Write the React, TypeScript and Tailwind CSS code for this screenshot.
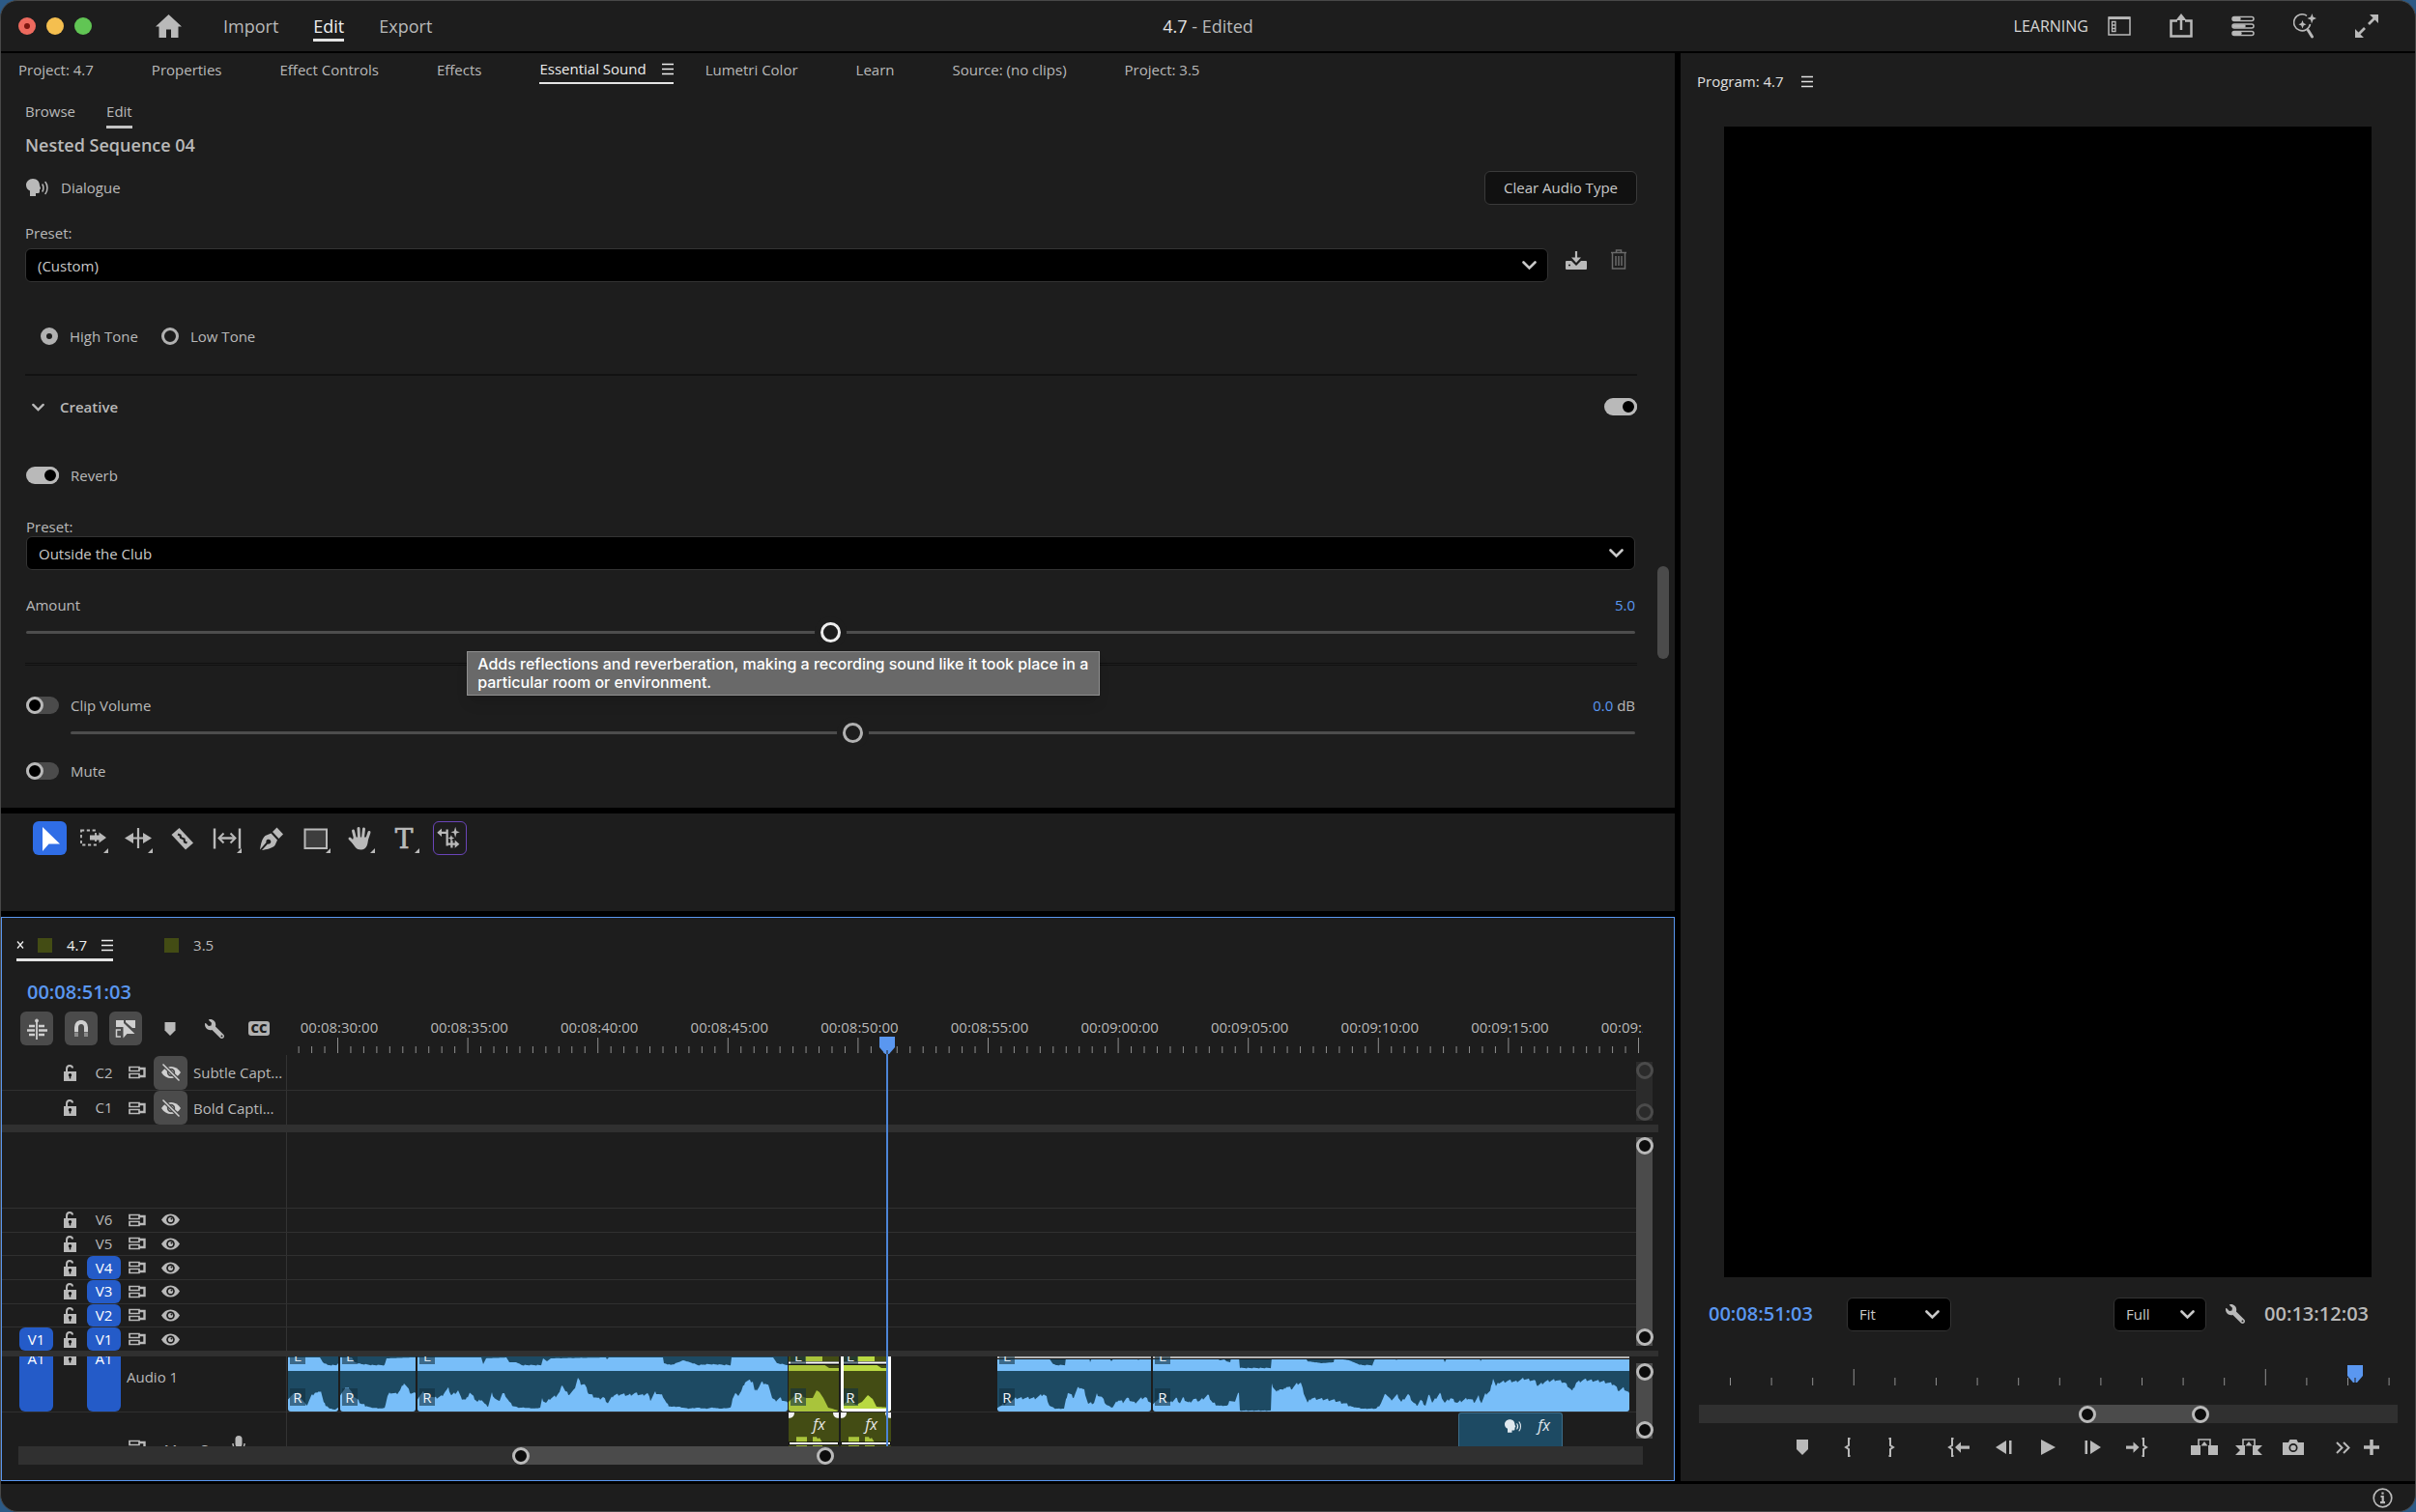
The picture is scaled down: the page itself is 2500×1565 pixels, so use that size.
import React, { useState } from 'react';
import { FaWrench } from 'react-icons/fa';
import clsx from 'clsx';

type Point = [number, number];

const panelTabs = [
  'Project: 4.7',
  'Properties',
  'Effect Controls',
  'Effects',
  'Essential Sound',
  'Lumetri Color',
  'Learn',
  'Source: (no clips)',
  'Project: 3.5',
];

const rulerLabels = [
  '00:08:30:00',
  '00:08:35:00',
  '00:08:40:00',
  '00:08:45:00',
  '00:08:50:00',
  '00:08:55:00',
  '00:09:00:00',
  '00:09:05:00',
  '00:09:10:00',
  '00:09:15:00',
  '00:09:20:00',
];

// Timeline lanes are measured in these units, clips are placed as a share of them
const LANE_WIDTH = 1396;
const RULER_WIDTH = 1403;

const videoTracks = [
  { id: 'V6', targeted: false },
  { id: 'V5', targeted: false },
  { id: 'V4', targeted: true },
  { id: 'V3', targeted: true },
  { id: 'V2', targeted: true },
  { id: 'V1', targeted: true, patch: 'V1' },
];

interface ClipData {
  start: number;
  width: number;
  kind: 'blue' | 'green';
  selected?: boolean;
  topEdge?: boolean;
  right: Point[];
  dips: Point[];
}

const clips: ClipData[] = [
  {
    start: 1,
    width: 52,
    kind: 'blue',
    right: [[0, 14], [10, 20], [19, 6], [24, 16], [28, 20], [31, 19], [34, 22], [37, 9], [43, 3], [49, 2], [52, 4]],
    dips: [[0, 0], [33, 0], [36, 5], [41, 8], [50, 8], [52, 6]],
  },
  {
    start: 55,
    width: 78,
    kind: 'blue',
    right: [[0, 18], [8, 26], [14, 16], [22, 8], [29, 5], [32, 4], [44, 3], [46, 4], [49, 16], [52, 20], [58, 18], [62, 22], [66, 30], [70, 24], [73, 19], [78, 19]],
    dips: [[0, 0], [12, 0], [15, 5], [22, 7], [34, 8], [46, 8], [48, 1], [78, 0]],
  },
  {
    start: 135,
    width: 383,
    kind: 'blue',
    right: [
      [0, 14], [6, 20], [14, 16], [18, 14], [25, 16], [28, 20], [32, 24], [35, 17], [40, 20], [42, 22], [45, 14], [50, 12], [54, 20], [58, 15], [62, 10], [66, 13], [70, 7], [73, 5],
      [77, 19], [80, 14], [84, 10], [88, 19], [91, 17], [95, 10], [98, 6], [105, 4], [112, 4], [122, 3], [127, 4], [129, 13], [133, 9], [138, 14], [143, 16], [147, 20], [150, 28],
      [153, 21], [157, 18], [162, 22], [166, 35], [169, 29], [173, 28], [177, 19], [182, 16], [188, 13], [192, 15], [197, 9], [203, 17], [210, 18], [218, 17], [225, 19], [232, 17],
      [238, 19], [241, 12], [246, 20], [250, 18], [254, 16], [258, 8], [262, 5], [270, 5], [280, 3], [290, 4], [298, 3], [305, 4], [315, 3], [324, 4], [326, 14], [329, 19], [331, 16],
      [335, 21], [339, 31], [343, 32], [347, 31], [349, 21], [353, 25], [356, 30], [360, 29], [364, 26], [367, 14], [370, 11], [375, 14], [383, 9],
    ],
    dips: [
      [0, 0], [66, 0], [68, 7], [71, 1], [92, 0], [95, 5], [102, 5], [108, 8], [128, 8], [130, 1], [134, 4], [138, 1], [195, 0], [196, 2], [198, 0], [254, 0], [255, 6], [262, 8],
      [270, 5], [275, 3], [282, 5], [290, 8], [302, 7], [324, 8], [325, 0], [368, 0], [372, 6], [383, 8],
    ],
  },
  {
    start: 519,
    width: 52,
    kind: 'green',
    right: [[0, 10], [8, 18], [18, 14], [25, 14], [29, 22], [32, 20], [36, 14], [41, 4], [52, 1]],
    dips: [],
  },
  {
    start: 573,
    width: 52,
    kind: 'green',
    selected: true,
    right: [[0, 5], [8, 12], [16, 7], [22, 10], [28, 17], [33, 13], [37, 5], [52, 4]],
    dips: [],
  },
  {
    start: 735,
    width: 159,
    kind: 'blue',
    topEdge: true,
    right: [
      [0, 4], [8, 8], [20, 14], [27, 14], [39, 14], [48, 18], [51, 15], [54, 6], [60, 3], [69, 3], [73, 20], [79, 15], [83, 24], [86, 25], [90, 22], [94, 8], [100, 9], [103, 18],
      [108, 15], [113, 7], [119, 4], [125, 12], [130, 10], [134, 14], [142, 9], [148, 13], [153, 15], [159, 9],
    ],
    dips: [[0, 0], [53, 0], [57, 6], [60, 8], [70, 8], [71, 0], [95, 0], [96, 5], [98, 0], [116, 1], [118, 4], [121, 0], [144, 0], [146, 3], [148, 0]],
  },
  {
    start: 896,
    width: 493,
    kind: 'blue',
    topEdge: true,
    right: [
      [0, 9], [10, 14], [18, 9], [24, 14], [28, 9], [31, 14], [37, 9], [42, 13], [48, 11], [57, 17], [62, 9], [69, 6], [77, 6], [79, 12], [84, 9], [88, 19], [89, 19], [90, 1], [122, 1],
      [123, 28], [128, 20], [131, 24], [135, 22], [138, 26], [144, 24], [148, 28], [153, 30], [156, 20], [160, 9], [164, 14], [173, 13], [186, 12], [197, 9], [206, 5], [217, 3],
      [231, 3], [236, 9], [241, 19], [246, 12], [253, 17], [257, 10], [264, 18], [269, 10], [273, 6], [277, 12], [282, 6], [286, 19], [289, 9], [297, 19], [302, 9], [308, 14], [315, 9],
      [326, 14], [333, 10], [337, 16], [340, 9], [344, 18], [349, 21], [352, 35], [355, 26], [358, 30], [368, 32], [375, 31], [384, 34], [395, 32], [398, 27], [406, 31], [417, 33],
      [426, 30], [430, 26], [434, 21], [438, 30], [446, 33], [467, 31], [477, 28], [482, 22], [487, 24], [493, 19],
    ],
    dips: [
      [0, 0], [66, 0], [69, 3], [74, 2], [76, 4], [80, 5], [81, 0], [89, 0], [90, 11], [122, 11], [123, 0], [158, 0], [160, 4], [175, 6], [187, 5], [188, 0], [197, 2], [203, 3],
      [210, 6], [216, 8], [227, 8], [230, 1], [250, 0], [252, 3], [254, 0], [300, 0], [302, 5], [304, 1], [312, 2], [314, 0], [338, 0], [339, 4], [341, 0], [493, 0]],
  },
];

// Steps along the points one unit at a time so the outline gets its ragged edge
function sample(points: Point[], rough: number) {
  const out: Point[] = [];
  for (let i = 0; i < points.length - 1; i++) {
    const [x0, y0] = points[i];
    const [x1, y1] = points[i + 1];
    for (let x = x0; x < x1; x++) {
      const y = y0 + ((y1 - y0) * (x - x0)) / (x1 - x0);
      const noise = (((x * 7919) % 13) / 13 - 0.5) * rough * (y > 6 ? 1 : 0.2);
      out.push([x, Math.max(0, y + noise)]);
    }
  }
  out.push(points[points.length - 1]);
  return out;
}

function Hamburger({ className = '' }: { className?: string }) {
  return (
    <svg width="12" height="13" viewBox="0 0 12 13" className={className} stroke="currentColor" strokeWidth="1.5">
      <path d="M0 1.5h12M0 6.5h12M0 11.5h12" />
    </svg>
  );
}

function Chevron({ size = 15 }: { size?: number }) {
  return (
    <svg width={size} height={size} viewBox="0 0 15 15" fill="none" stroke="currentColor" strokeWidth="2.6" strokeLinecap="round">
      <path d="M1.5 4.5l6 6 6-6" />
    </svg>
  );
}

function SpeakingHead({ className = '' }: { className?: string }) {
  return (
    <svg width="24" height="18" viewBox="0 0 24 18" className={className}>
      <path fill="currentColor" d="M7 0C3 0 0 3 0 6.6c0 3 1.5 4.9 4 6V18h6v-3h2.5c1.2 0 1.5-.8 1.5-2v-2l1.2-.8L14 7C14 3 11.5 0 7 0z" />
      <path fill="none" stroke="currentColor" strokeWidth="1.5" strokeLinecap="round" d="M17 6c1.2 1.8 1.2 5.2 0 7M20 3.5c2.6 3 2.6 9 0 12" />
    </svg>
  );
}

function MarkerIcon() {
  return (
    <svg width="14" height="16" viewBox="0 0 14 16" fill="currentColor">
      <path d="M1.500 1h11v8.500L7 15 1.500 9.500z" />
    </svg>
  );
}

function LockIcon({ open = true }: { open?: boolean }) {
  return (
    <svg width="15" height="17" viewBox="0 0 15 17">
      <path fill="currentColor" d="M1 7h13v10H1z" />
      <path fill="none" stroke="currentColor" strokeWidth="2" d={open ? 'M4 8V4.5C4 2.500 5 1 7 1s3 1 3 2.500' : 'M4 8V4c0-4 7-4 7 0v4'} />
      <circle cx="7.5" cy="10.8" r="1.700" fill="#111" />
      <path stroke="#111" strokeWidth="1.500" d="M7.500 11v3.500" />
    </svg>
  );
}

function SyncIcon() {
  return (
    <svg width="18" height="14" viewBox="0 0 18 14" fill="none" stroke="currentColor" strokeWidth="1.7">
      <path d="M1 1.5h10v4H1zM1 8.5h10v4H1z" />
      <path strokeWidth="2.400" d="M11 3h5.500v8H11" />
    </svg>
  );
}

function EyeIcon() {
  return (
    <svg width="19" height="13" viewBox="0 0 19 13">
      <path fill="currentColor" d="M0 6.500C2.500 2.500 5.500.5 9.500.5s7 2 9.500 6c-2.500 4-5.500 6-9.500 6s-7-2-9.500-6z" />
      <circle cx="9.500" cy="6.500" r="4.300" fill="#1d1d1d" />
      <circle cx="9.500" cy="6.500" r="2.600" fill="currentColor" />
      <circle cx="10.500" cy="5.500" r="1" fill="#1d1d1d" />
    </svg>
  );
}

function EyeOffIcon() {
  return (
    <svg width="20" height="18" viewBox="0 0 20 18">
      <path fill="currentColor" d="M0 9c2.500-4 6-6 10-6s7.500 2 10 6c-2.500 4-6 6-10 6S2.500 13 0 9z" />
      <circle cx="10" cy="9" r="4.200" fill="#4b4b4b" />
      <circle cx="10" cy="9" r="2.500" fill="currentColor" />
      <path stroke="#4b4b4b" strokeWidth="4" d="M2 1l16 16" />
      <path stroke="currentColor" strokeWidth="1.500" d="M1.500 .5l17 17" />
    </svg>
  );
}

function Switch({ label, defaultChecked = false, hideLabel = false }: { label: string; defaultChecked?: boolean; hideLabel?: boolean }) {
  const [on, setOn] = useState(defaultChecked);
  return (
    <label className="flex items-center gap-3">
      <input
        type="checkbox"
        role="switch"
        aria-label={label}
        checked={on}
        onChange={() => setOn(!on)}
        className="flex h-[18px] w-[34px] appearance-none rounded-full bg-[#4b4b4b] before:size-[18px] before:rounded-full before:border-[3px] before:border-[#b9b9b9] before:bg-black before:content-[''] checked:justify-end checked:bg-[#b9b9b9]"
      />
      {!hideLabel && <span>{label}</span>}
    </label>
  );
}

function Slider({ label, bright = false }: { label: string; bright?: boolean }) {
  const [value, setValue] = useState(50);
  return (
    <input
      type="range"
      aria-label={label}
      value={value}
      onChange={(e) => setValue(Number(e.target.value))}
      className={clsx(
        'block h-5 w-full appearance-none bg-transparent',
        '[&::-webkit-slider-runnable-track]:h-[3px] [&::-webkit-slider-runnable-track]:rounded-full [&::-webkit-slider-runnable-track]:bg-[#4d4d4d]',
        '[&::-webkit-slider-thumb]:-mt-[9px] [&::-webkit-slider-thumb]:size-[21px] [&::-webkit-slider-thumb]:appearance-none [&::-webkit-slider-thumb]:rounded-full [&::-webkit-slider-thumb]:border-[3px] [&::-webkit-slider-thumb]:bg-[#1d1d1d] [&::-webkit-slider-thumb]:shadow-[0_0_0_6px_#1d1d1d]',
        bright ? '[&::-webkit-slider-thumb]:border-[#ededed]' : '[&::-webkit-slider-thumb]:border-[#b1b1b1]'
      )}
    />
  );
}

function Dropdown({ id, value, label, className = '' }: { id: string; value: string; label?: string; className?: string }) {
  return (
    <div className={`relative ${className}`}>
      <select
        id={id}
        aria-label={label}
        defaultValue={value}
        className="block h-[35px] w-full appearance-none rounded-md border border-[#333] bg-black pr-8 pl-3 text-[#c9c9c9]"
      >
        <option>{value}</option>
      </select>
      <span className="pointer-events-none absolute inset-y-0 right-3 flex items-center text-[#c9c9c9]">
        <Chevron />
      </span>
    </div>
  );
}

function Handle({ dim = false, label }: { dim?: boolean; label: string }) {
  return (
    <button
      aria-label={label}
      className={clsx('block size-[18px] rounded-full border-[3px]', dim ? 'border-[#4b4b4b] bg-[#2b2b2b]' : 'border-[#b9b9b9] bg-[#0c0c0c]')}
    />
  );
}

function ZoomBar({ from, to }: { from: number; to: number }) {
  return (
    <div className="flex h-[19px] items-stretch bg-[#303030]">
      <div style={{ width: `${from}%` }} />
      <div className="flex items-center justify-between rounded-full bg-[#4b4b4b]" style={{ width: `${to - from}%` }}>
        <Handle label="Zoom start" />
        <Handle label="Zoom end" />
      </div>
    </div>
  );
}

function TrackZoom({ dim = false, className = '' }: { dim?: boolean; className?: string }) {
  return (
    <div className={clsx('mr-[22px] flex w-[17px] flex-col items-center justify-between', dim ? 'bg-[#2b2b2b]' : 'bg-[#4b4b4b]', className)}>
      <Handle dim={dim} label="Track height start" />
      <Handle dim={dim} label="Track height end" />
    </div>
  );
}

function TopBar() {
  const modes = ['Import', 'Edit', 'Export'];
  return (
    <header className="grid h-[52px] grid-cols-3 items-center">
      <div className="flex h-full items-center pl-[18px]">
        <div className="flex gap-[11px]">
          <button aria-label="Close" className="flex size-[18px] items-center justify-center rounded-full bg-[#ed6a5e]">
            <span className="size-1.5 rounded-full bg-[#7d170f]" />
          </button>
          <button aria-label="Minimize" className="size-[18px] rounded-full bg-[#f5bf4f]" />
          <button aria-label="Zoom" className="size-[18px] rounded-full bg-[#61c554]" />
        </div>
        <button aria-label="Home" className="ml-[66px] text-[#b9b9b9]">
          <svg width="27" height="24" viewBox="0 0 27 24" fill="currentColor">
            <path d="M13.500 0L27 12.500h-3.500V24H16v-8.500h-5V24H3.500V12.500H0z" />
          </svg>
        </button>
        <nav className="ml-[43px] flex gap-9 text-lg">
          {modes.map((mode) => (
            <button
              key={mode}
              className={clsx('h-8 border-b-[3px] pt-0.5', mode === 'Edit' ? 'border-[#e4e4e4] text-[#f0f0f0]' : 'border-transparent')}
            >
              {mode}
            </button>
          ))}
        </nav>
      </div>
      <h1 className="text-center text-lg">
        <span className="text-[#e4e4e4]">4.7</span> - Edited
      </h1>
      <div className="flex items-center justify-end gap-10 pr-[38px]">
        <button className="-mr-5 text-base text-[#d6d6d6]">LEARNING</button>
        <button aria-label="Workspaces">
          <svg width="24" height="24" viewBox="0 0 24 24" fill="none" stroke="currentColor">
            <path strokeWidth="1.500" d="M1 3h22v18H1z" />
            <path strokeWidth="2.500" d="M1 3.700h22" />
            <path strokeWidth="1.300" d="M4.500 7.500h3.500v10H4.500zM4.500 11h3.500M4.500 14.500h3.500" />
          </svg>
        </button>
        <button aria-label="Quick export">
          <svg width="24" height="26" viewBox="0 0 24 26" fill="none" stroke="currentColor">
            <path strokeWidth="2.500" d="M8 7.500H1.500v16h21v-16H16" />
            <path strokeWidth="2.500" d="M12 4v13" />
            <path fill="currentColor" stroke="none" d="M12 0l5.500 7h-11z" />
          </svg>
        </button>
        <button aria-label="Progress">
          <svg width="24" height="22" viewBox="0 0 24 22" fill="#111" stroke="currentColor" strokeWidth="1.500">
            <rect x="1" y="1.500" width="22" height="4" rx="2" />
            <rect x="1" y="9" width="22" height="4" rx="2" />
            <rect x="1" y="16.500" width="22" height="4" rx="2" />
            <path strokeWidth="3.500" strokeLinecap="round" d="M3 3.500h5M3 11h10M3 18.500h6" />
          </svg>
        </button>
        <button aria-label="Search">
          <svg width="24" height="26" viewBox="0 0 24 26" fill="none" stroke="currentColor">
            <path strokeWidth="1.600" d="M14 2.300A8.500 8.500 0 1 0 17.500 11" />
            <path strokeWidth="3" strokeLinecap="round" d="M15.500 17.500l4 6.500" />
            <path
              fill="currentColor"
              stroke="none"
              d="M19.500 0l1 3.500L24 5l-3.500 1.500-1.500 4-1-4L14.500 5 18 3.500zM9.500 7l1.200 3 2.800 1.200-2.800 1.300-1.200 3-1.200-3-2.800-1.300 2.800-1.200z"
            />
          </svg>
        </button>
        <button aria-label="Full screen">
          <svg width="24" height="24" viewBox="0 0 24 24" stroke="currentColor" strokeWidth="2.800">
            <path d="M14 10l6-6M10 14l-6 6" />
            <path fill="currentColor" stroke="none" d="M24 0v9L15 0zM0 24v-9l9 9z" />
          </svg>
        </button>
      </div>
    </header>
  );
}

function EssentialSound() {
  return (
    <section className="relative bg-[#1d1d1d] pb-2">
      <div className="flex h-9 gap-[33px] pl-[18px]">
        {panelTabs.map((tab) =>
          tab === 'Essential Sound' ? (
            <div key={tab} className="mb-1 flex items-center gap-4 border-b-2 border-[#e4e4e4] pt-0.5 text-[#ededed]">
              <button>{tab}</button>
              <button aria-label="Panel menu">
                <Hamburger />
              </button>
            </div>
          ) : (
            <button key={tab} className="pr-[27px] pb-0.5">
              {tab}
            </button>
          )
        )}
      </div>
      <div className="flex h-[42px] gap-8 pl-[25px]">
        <button className="border-b-[3px] border-transparent pt-2">Browse</button>
        <button className="border-b-[3px] border-[#c4c4c4] pt-2">Edit</button>
      </div>
      <div className="pr-[39px] pl-[25px]">
        <h2 className="flex h-[34px] items-center text-lg font-semibold">Nested Sequence 04</h2>
        <div className="flex h-[54px] items-center">
          <SpeakingHead className="ml-px" />
          <span className="ml-3">Dialogue</span>
          <button className="ml-auto h-[35px] rounded-md border border-[#3a3a3a] bg-[#111] px-[19px] text-[#c9c9c9]">Clear Audio Type</button>
        </div>
        <label htmlFor="clip-preset" className="flex h-9 items-center pt-1">
          Preset:
        </label>
        <div className="flex items-start">
          <Dropdown id="clip-preset" value="(Custom)" className="flex-1" />
          <button aria-label="Save preset" className="mt-[3px] ml-[18px]">
            <svg width="22" height="19" viewBox="0 0 22 19">
              <path fill="currentColor" d="M1 10h5l5 5 5-5h5a1 1 0 0 1 1 1v7a1 1 0 0 1-1 1H1a1 1 0 0 1-1-1v-7a1 1 0 0 1 1-1z" />
              <path stroke="currentColor" strokeWidth="2.200" d="M11 0v8" />
              <path fill="currentColor" d="M6 6.500h10L11 12z" />
              <path stroke="#1d1d1d" strokeWidth="1.500" d="M3 14.500h2" />
            </svg>
          </button>
          <button aria-label="Delete preset" disabled className="mt-px mr-2.5 ml-6 text-[#6a6a6a]">
            <svg width="18" height="21" viewBox="0 0 18 21" fill="none" stroke="currentColor" strokeWidth="1.500">
              <path d="M1 3.500h16M6.500 3V1h5v2M2.500 4v16h13V4M6 7v10M9 7v10M12 7v10" />
            </svg>
          </button>
        </div>
        <div className="mt-[38px] flex h-9 items-center gap-6 pl-4">
          {['High Tone', 'Low Tone'].map((tone, i) => (
            <label key={tone} className="flex items-center gap-3">
              <input
                type="radio"
                name="tone"
                defaultChecked={i === 0}
                className="size-[18px] appearance-none rounded-full border-[3px] border-[#b1b1b1] checked:border-[6px]"
              />
              {tone}
            </label>
          ))}
        </div>
        <div className="mt-[21px] h-0.5 bg-[#121212]" />
        <div className="flex h-16 items-center pl-px">
          <button className="flex items-center gap-4 pl-1.5 font-semibold">
            <Chevron size={13} />
            Creative
          </button>
          <div className="ml-auto">
            <Switch label="Creative" defaultChecked hideLabel />
          </div>
        </div>
        <div className="flex h-[78px] items-center pl-px">
          <Switch label="Reverb" defaultChecked />
        </div>
        <div className="pr-0.5 pl-px">
          <label htmlFor="reverb-preset" className="flex h-6 items-center pt-1">
            Preset:
          </label>
          <Dropdown id="reverb-preset" value="Outside the Club" />
          <div className="flex h-[54px] items-center justify-between pt-[18px]">
            <span>Amount</span>
            <span className="text-[#5a97f0]">5.0</span>
          </div>
          <div className="relative">
            <Slider label="Amount" bright />
            <div
              role="tooltip"
              className="absolute top-[30px] left-[27.4%] z-10 w-[655px] border border-[#8f8f8f] bg-[#696969] px-2.5 py-[3px] font-['Inter',sans-serif] text-base leading-[19px] font-medium text-white shadow-lg"
            >
              Adds reflections and reverberation, making a recording sound like it took place in a particular room or environment.
            </div>
          </div>
        </div>
        <div className="mt-[22px] h-[3px] border-y border-[#111] bg-[#1d1d1d]" />
        <div className="pr-0.5 pl-px">
          <div className="flex h-[59px] items-center justify-between pt-[22px]">
            <Switch label="Clip Volume" />
            <span>
              <span className="text-[#5a97f0]">0.0</span> dB
            </span>
          </div>
          <div className="pl-[46px]">
            <Slider label="Clip Volume" />
          </div>
        </div>
        <div className="flex h-[60px] items-center pl-px">
          <Switch label="Mute" />
        </div>
      </div>
      <div className="absolute top-[68%] right-1.5 h-24 w-3 rounded-full bg-[#4b4b4b]" />
    </section>
  );
}

function Corner() {
  return <path fill="currentColor" stroke="none" d="M32 28v5h-5z" />;
}

const tools = [
  {
    label: 'Selection',
    art: <path fill="#fff" d="M10 6v25l6.500-7.500H28z" />,
  },
  {
    label: 'Track select',
    art: (
      <>
        <path fill="none" stroke="currentColor" strokeWidth="1.800" strokeDasharray="3.200 2.600" d="M4 9.500h15v15H4z" />
        <path fill="currentColor" d="M13 14.500h9.500V11.500L30 17l-7.500 5.500v-3H13z" />
        <Corner />
      </>
    ),
  },
  {
    label: 'Ripple edit',
    art: (
      <>
        <path stroke="currentColor" strokeWidth="2.200" d="M17 7v21M8 17.500h18" />
        <path fill="currentColor" d="M3 17.500l9-5.500v11zM31 17.500l-9-5.500v11z" />
        <Corner />
      </>
    ),
  },
  {
    label: 'Razor',
    art: (
      <>
        <path fill="currentColor" d="M5.500 14l8-7L28 22.500l-8 7z" />
        <path fill="none" stroke="#1d1d1d" strokeWidth="2.200" d="M12 13.500l2.500 1 .5 2.500 3.500 1.500.5 3 2.500 1" />
      </>
    ),
  },
  {
    label: 'Slip',
    art: (
      <>
        <path stroke="currentColor" strokeWidth="2.400" d="M4 7.500v21M30 7.500v21M10 17.500h14" />
        <path fill="none" stroke="currentColor" strokeWidth="2" d="M13.500 12.500l-5 5 5 5M20.500 12.500l5 5-5 5" />
        <Corner />
      </>
    ),
  },
  {
    label: 'Pen',
    art: (
      <>
        <path fill="currentColor" d="M5 29.500c1-6 2-11.500 5.500-14.500l6-2.500 6.500 7-2.500 5.500c-3 3.500-9 4-13.500 5l6-6.500a2.500 2.500 0 1 0-1.500-1.500z" />
        <path fill="currentColor" d="M18 11l4.500-4.500 6.500 7-4.500 4.500z" />
      </>
    ),
  },
  {
    label: 'Rectangle',
    art: (
      <>
        <path fill="#3d3d3d" stroke="currentColor" strokeWidth="2" d="M5.500 8.500h22.500v19.500H5.500z" />
        <Corner />
      </>
    ),
  },
  {
    label: 'Hand',
    art: (
      <>
        <path
          fill="none"
          stroke="currentColor"
          strokeWidth="3"
          strokeLinecap="round"
          d="M11.500 18L9.500 10M15.500 17l-.5-9.500M19.500 17l1-9M23.500 19l2.500-7.500M11 23l-5-5"
        />
        <path fill="currentColor" d="M10 16.500h15c0 7-1.500 13-7.500 13-5 0-6.500-3.500-9.500-8z" />
        <Corner />
      </>
    ),
  },
  {
    label: 'Type',
    art: (
      <>
        <text x="16" y="28" textAnchor="middle" fontSize="28" fontFamily="DejaVu Serif, serif" fill="currentColor" stroke="currentColor" strokeWidth="0.700">
          T
        </text>
        <Corner />
      </>
    ),
  },
  {
    label: 'Generative extend',
    art: (
      <>
        <path stroke="currentColor" strokeWidth="2.400" d="M14.500 8v18M5 11.500h9M15 24h9M19.500 20v8" />
        <path fill="currentColor" d="M3.500 11.500L8.500 7v9zM28 24l-5-4.500v9z" />
        <path fill="currentColor" d="M23.500 5l1.300 4.700L28.500 11l-3.700 1.300L23.500 17l-1.300-4.700L18.500 11l3.700-1.300zM19 14l1 2.500 2.500 1-2.500 1-1 2.500-1-2.500-2.500-1 2.500-1z" />
      </>
    ),
  },
];

function Tools() {
  const [active, setActive] = useState('Selection');
  return (
    <section className="flex h-[101px] gap-[11px] bg-[#1d1d1d] pt-2 pl-[33px]">
      {tools.map((tool) => (
        <button
          key={tool.label}
          aria-label={tool.label}
          onClick={() => setActive(tool.label)}
          className={clsx(
            'size-[35px] rounded-md',
            active === tool.label && 'bg-[#2f6de6]',
            tool.label === 'Generative extend' && 'border border-[#6a45b8]'
          )}
        >
          <svg viewBox="0 0 35 35" className="size-full">
            {tool.art}
          </svg>
        </button>
      ))}
    </section>
  );
}

interface TrackHeaderProps {
  patch?: string;
  name: string;
  targeted?: boolean;
  children?: React.ReactNode;
}

function TrackHeader({ patch, name, targeted, children }: TrackHeaderProps) {
  return (
    <div className="grid h-full w-[295px] shrink-0 grid-cols-[35px_35px_35px_34px_35px_1fr] items-center justify-items-center border-r border-[#333] pl-[18px]">
      {patch ? <button className="h-full w-full rounded-md bg-[#245bc8] leading-none text-white">{patch}</button> : <span />}
      <button aria-label={`Lock ${name}`}>
        <LockIcon />
      </button>
      <button className={clsx('h-full w-full rounded-md leading-none', targeted && 'bg-[#245bc8] text-white')}>{name}</button>
      <button aria-label={`Sync lock ${name}`}>
        <SyncIcon />
      </button>
      {children}
    </div>
  );
}

function Clip({ clip }: { clip: ClipData }) {
  const green = clip.kind === 'green';
  const dark = green ? '#434c14' : '#1d4a63';
  const light = green ? (clip.selected ? '#b9d942' : '#a9c43b') : '#78bef9';
  const w = clip.width;
  const wave = sample(clip.right, green ? 0 : 3);
  const dips = clip.dips.length ? sample(clip.dips, 1) : [];
  return (
    <div
      className="absolute inset-y-0 overflow-hidden rounded-b-[3px]"
      style={{ left: `${(clip.start / LANE_WIDTH) * 100}%`, width: `${(w / LANE_WIDTH) * 100}%` }}
    >
      <svg viewBox={`0 0 ${w} 57`} preserveAspectRatio="none" className="block h-full w-full">
        <rect width={w} height="57" fill={dark} />
        {green ? (
          <>
            <path fill={light} d={`M17 0H35V5H17zM0 8H36L42 12H${w}V15H0z`} />
            <path stroke="#111" strokeWidth="4" d={`M0 7H${w}`} />
            <path stroke="#fff" strokeWidth="2" d={`M0 6.500H${w}`} />
          </>
        ) : (
          <>
            <rect y="1" width={w} height="14" fill={light} />
            <path fill={dark} d={`M0 1 ${dips.map(([x, d]) => `L${x} ${1 + d}`).join(' ')} L${w} 1z`} />
          </>
        )}
        <path fill={light} d={`M0 57 ${wave.map(([x, h]) => `L${x} ${57 - h}`).join(' ')} L${w} 57z`} />
        {clip.topEdge && (
          <>
            <path stroke="#b4b4b4" strokeWidth="2" d={`M0 1H${w}`} />
            <path stroke="#111" strokeWidth="1" d={`M0 2.500H${w}`} />
          </>
        )}
      </svg>
      <span className="absolute -top-2.5 left-0.5 h-[18px] w-4 bg-[#12303f]/60 text-center leading-[18px] text-[#e0e8ee]">L</span>
      <span className="absolute bottom-1.5 left-0.5 h-[18px] w-4 bg-[#12303f]/60 text-center leading-[18px] text-[#f0f4f7]">R</span>
      {clip.selected && <span className="absolute inset-x-0 -top-1 bottom-0 border-[3px] border-white" />}
    </div>
  );
}

function FxClip({ start }: { start: number }) {
  return (
    <div className="absolute inset-y-0" style={{ left: `${(start / LANE_WIDTH) * 100}%`, width: `${(52 / LANE_WIDTH) * 100}%` }}>
      <svg viewBox="0 0 52 36" preserveAspectRatio="none" className="block h-full w-full">
        <rect width="52" height="36" fill="#434c14" />
        <path fill="#a9c43b" d="M8 26h11v10H8zM25 26h4l1 2 2-1 3 5v4H25z" />
        <path stroke="#111" strokeWidth="4" d="M0 33H52" />
        <path stroke="#fff" strokeWidth="2" d="M1 33H51" />
        <path fill="#f2f2f2" d="M0 0h6c0 4-2 6-6 6zM52 0h-6c0 4 2 6 6 6z" />
      </svg>
      <span className="absolute top-0.5 right-3.5 text-base leading-5 text-[#e8e8e8] italic">fx</span>
    </div>
  );
}

function Timeline() {
  const ticks = Array.from({ length: 104 }, (_, i) => i - 3);
  return (
    <section className="flex flex-1 flex-col border border-[#5a97f0] bg-[#1d1d1d]">
      <div className="flex h-[45px] gap-[53px] pl-[15px]">
        <div className="flex items-center border-b-[3px] border-[#e4e4e4] pt-3.5 text-[#ededed]">
          <button aria-label="Close 4.7" className="w-2.5">
            <svg width="8" height="8" viewBox="0 0 8 8" stroke="currentColor" strokeWidth="1.300">
              <path d="M1 .5l6 7M7 .5l-6 7" />
            </svg>
          </button>
          <span className="ml-3 size-[15px] bg-[#434c14]" />
          <button className="ml-[15px]">4.7</button>
          <button aria-label="Sequence menu" className="ml-[15px]">
            <Hamburger />
          </button>
        </div>
        <button className="flex items-center gap-[15px] border-b-[3px] border-transparent pt-3.5">
          <span className="size-[15px] bg-[#434c14]" />
          3.5
        </button>
      </div>
      <div className="flex h-[52px] items-center pt-3 pl-[26px] text-xl font-semibold text-[#5a97f0]">00:08:51:03</div>

      <div className="relative flex flex-1 flex-col">
        <div className="flex h-[45px]">
          <div className="flex w-[295px] shrink-0 items-start gap-3 pl-[19px] [&>button]:flex [&>button]:h-[35px] [&>button]:w-[34px] [&>button]:items-center [&>button]:justify-center [&>button]:rounded-md">
            <button aria-label="Insert as nest" className="bg-[#4b4b4b] text-[#d0d0d0]">
              <svg width="22" height="22" viewBox="0 0 22 22" stroke="currentColor" fill="none">
                <path strokeWidth="1.800" d="M11 2v20" />
                <circle cx="11" cy="2.500" r="1.500" fill="currentColor" />
                <path strokeWidth="2.600" d="M3 8h6M13 8h6M1 12.500h8M13 12.500h9M3 17h6M13 17h6" />
              </svg>
            </button>
            <button aria-label="Snap" className="bg-[#4b4b4b] text-[#d0d0d0]">
              <svg width="16" height="18" viewBox="0 0 16 18" fill="none" strokeWidth="4">
                <path stroke="currentColor" d="M3 12V7.500C3 0 13 0 13 7.500V12" />
                <path stroke="#8a8a8a" d="M3 12.500V17M13 12.500V17" />
              </svg>
            </button>
            <button aria-label="Linked selection" className="bg-[#4b4b4b] text-[#d0d0d0]">
              <svg width="22" height="20" viewBox="0 0 22 20">
                <path fill="currentColor" d="M1 1h8v7H1zM11 1h10v8h-3L11 3z" />
                <path fill="none" stroke="currentColor" strokeWidth="1.500" d="M6 11H1.500v7H6" />
                <path fill="currentColor" d="M8.500 3.500v16l4-4.500h8z" />
              </svg>
            </button>
            <button aria-label="Add marker">
              <MarkerIcon />
            </button>
            <button aria-label="Timeline settings">
              <FaWrench className="size-5 -scale-x-100" />
            </button>
            <button aria-label="Captions">
              <span className="rounded-[3px] bg-[#b1b1b1] px-[3px] text-[13px] leading-[15px] font-extrabold text-[#1d1d1d]">CC</span>
            </button>
          </div>
          <div className="relative mr-8 flex-1 overflow-hidden">
            {rulerLabels.map((label, i) => (
              <span key={label} className="absolute top-1.5 -translate-x-1/2" style={{ left: `${((54 + i * 134.6) / RULER_WIDTH) * 100}%` }}>
                {label}
              </span>
            ))}
            <svg className="absolute inset-0 h-full w-full" stroke="#8f8f8f">
              {ticks.map((i) => {
                const x = `${((52.5 + i * 13.46) / RULER_WIDTH) * 100}%`;
                return <line key={i} x1={x} x2={x} y1={i % 10 === 0 ? 27 : 36} y2="43" />;
              })}
            </svg>
          </div>
        </div>

        {/* Caption tracks */}
        <div className="flex h-[72px]">
          <div className="flex-1">
            {[
              { id: 'C2', name: 'Subtle Capt...' },
              { id: 'C1', name: 'Bold Capti...' },
            ].map((track, i) => (
              <div key={track.id} className={clsx('h-9', i === 1 && 'border-t border-[#303030]')}>
                <TrackHeader name={track.id}>
                  <button aria-label={`Show ${track.id}`} className="flex h-[35px] w-[35px] items-center justify-center rounded-md bg-[#4b4b4b] text-[#d0d0d0]">
                    <EyeOffIcon />
                  </button>
                  <span className="justify-self-start pl-1.5 whitespace-nowrap">{track.name}</span>
                </TrackHeader>
              </div>
            ))}
          </div>
          <TrackZoom dim className="mt-[7px] mb-1" />
        </div>
        <div className="mr-4 h-2 bg-[#303030]" />

        {/* Video tracks */}
        <div className="flex flex-1">
          <div className="flex flex-1 flex-col">
            <div className="w-[295px] flex-1 border-r border-[#333]" />
            <div className="grid h-[148px] grid-rows-6">
              {videoTracks.map((track) => (
                <div key={track.id} className="border-t border-[#303030]">
                  <TrackHeader name={track.id} targeted={track.targeted} patch={track.patch}>
                    <button aria-label={`Toggle ${track.id} output`}>
                      <EyeIcon />
                    </button>
                  </TrackHeader>
                </div>
              ))}
            </div>
          </div>
          <TrackZoom className="mt-[5px] mb-[5px]" />
        </div>
        <div className="mr-4 h-1.5 bg-[#303030]" />

        {/* Audio tracks, scrolled so the first and the second are cut off */}
        <div className="flex h-[93px] overflow-hidden">
          <div className="w-[295px] shrink-0 border-r border-[#333]">
            <div className="grid h-[58px] grid-cols-[35px_35px_35px_1fr] justify-items-center overflow-hidden border-b border-[#303030] pl-[18px]">
              <button className="-mt-2 flex h-[65px] w-full justify-center rounded-md bg-[#245bc8] leading-5 text-white">A1</button>
              <button aria-label="Lock A1" className="-mt-2 self-start">
                <LockIcon open={false} />
              </button>
              <button className="-mt-2 flex h-[65px] w-full justify-center rounded-md bg-[#245bc8] leading-5 text-white">A1</button>
              <span className="justify-self-start pt-[11px] pl-1.5">Audio 1</span>
            </div>
            <div className="grid h-[35px] grid-cols-[34px_35px_35px_35px] items-start justify-items-center overflow-hidden pt-7 pl-[123px]">
              <SyncIcon />
              <button className="leading-5">M</button>
              <button className="leading-5">S</button>
              <button aria-label="Voice-over record" className="-mt-1">
                <svg width="14" height="18" viewBox="0 0 14 18">
                  <rect x="3.500" width="7" height="12" rx="3.500" fill="currentColor" />
                  <path fill="none" stroke="currentColor" strokeWidth="1.500" d="M1 8c0 8 12 8 12 0" />
                </svg>
              </button>
            </div>
          </div>
          <div className="flex-1">
            <div className="relative h-[58px] border-b border-[#303030]">
              {clips.map((clip) => (
                <Clip key={clip.start} clip={clip} />
              ))}
            </div>
            <div className="relative h-[35px]">
              <FxClip start={519} />
              <FxClip start={573} />
              <div
                className="absolute inset-y-0 flex justify-end gap-4 rounded-t-[3px] border border-b-0 border-[#3c6d8a] bg-[#1d4a63] pt-0.5 pr-3 text-[#e0e8ee]"
                style={{ left: `${(1212 / LANE_WIDTH) * 100}%`, width: `${(108 / LANE_WIDTH) * 100}%` }}
              >
                <SpeakingHead className="mt-1 h-3.5 w-[18px]" />
                <span className="text-base leading-5 italic">fx</span>
              </div>
            </div>
          </div>
          <TrackZoom className="mt-[7px] mb-2" />
        </div>

        {/* Playhead */}
        <div className="pointer-events-none absolute inset-y-0 right-[39px] left-[295px]">
          <div className="absolute top-[26px] bottom-0 left-[44.5%] flex -translate-x-1/2 flex-col items-center">
            <svg width="16" height="18" viewBox="0 0 16 18" className="shrink-0">
              <path fill="#5a97f0" d="M0 0h16v11l-6 7H6l-6-7z" />
              <path stroke="#1d1d1d" d="M8 14v4" />
            </svg>
            <div className="w-0.5 flex-1 bg-[#4c84d6]" />
          </div>
        </div>
      </div>
      <div className="mr-8 mb-4 ml-[17px]">
        <ZoomBar from={30.4} to={50.2} />
      </div>
    </section>
  );
}

const transport = [
  [
    { label: 'Add marker', w: 14, art: <path d="M1 0h12v10l-6 6-6-6z" /> },
    { label: 'Mark in', w: 7, art: <path fill="none" stroke="currentColor" strokeWidth="2" d="M6.500-1H5v7L2 8l3 2v7h1.500" /> },
    { label: 'Mark out', w: 7, art: <path fill="none" stroke="currentColor" strokeWidth="2" d="M.5-1H2v7l3 2-3 2v7H.5" /> },
  ],
  [
    {
      label: 'Go to in',
      w: 22,
      art: (
        <>
          <path fill="none" stroke="currentColor" strokeWidth="2" d="M5.500-1H4v7L1 8l3 2v7h1.500" />
          <path d="M7 8l6-5.500V6.500h9v3.200h-9v4z" />
        </>
      ),
    },
    { label: 'Step back', w: 17, art: <path d="M0 8l11-7v14zM14 1h2.500v14H14z" /> },
    { label: 'Play', w: 15, art: <path d="M0 0l15 8-15 8z" /> },
    { label: 'Step forward', w: 17, art: <path d="M17 8L6 1v14zM.5 1H3v14H.5z" /> },
    {
      label: 'Go to out',
      w: 22,
      art: (
        <>
          <path fill="none" stroke="currentColor" strokeWidth="2" d="M16.500-1H18v7l3 2-3 2v7h-1.500" />
          <path d="M13.500 8L7.500 2.500V6.500H0v3.200h7.500v4z" />
        </>
      ),
    },
  ],
  [
    {
      label: 'Lift',
      w: 28,
      art: (
        <>
          <path d="M0 6h10v10H0zM18 6h10v10H18z" />
          <path fill="none" stroke="currentColor" strokeWidth="1.600" d="M10 10H8V0h12v10h-2" />
          <path d="M14 2l3.500 4.500h-7z" />
        </>
      ),
    },
    {
      label: 'Extract',
      w: 28,
      art: (
        <>
          <path d="M0 6h10v10H0l5-5zM28 6H18v10h10l-5-5z" />
          <path fill="none" stroke="currentColor" strokeWidth="1.600" d="M10 10H8V0h12v10h-2" />
          <path d="M14 2l3.500 4.500h-7z" />
        </>
      ),
    },
    {
      label: 'Export frame',
      w: 22,
      art: (
        <>
          <path d="M0 3h6l1.500-3h7L16 3h6v13H0z" />
          <circle cx="11" cy="8.500" r="3.700" fill="none" stroke="#1d1d1d" strokeWidth="1.700" />
        </>
      ),
    },
  ],
];

function ProgramMonitor() {
  const ticks = Array.from({ length: 17 }, (_, i) => i);
  return (
    <section className="flex flex-col bg-[#1d1d1d]">
      <div className="flex h-[76px] items-start gap-[18px] pt-[19px] pl-[17px] text-[#e0e0e0]">
        <h2>Program: 4.7</h2>
        <button aria-label="Program menu" className="mt-1">
          <Hamburger />
        </button>
      </div>
      <div className="mx-[45px] flex-1 bg-black" />
      <div className="flex h-[76px] items-center pr-12 pl-[29px]">
        <span className="text-xl font-semibold text-[#5a97f0]">00:08:51:03</span>
        <Dropdown id="zoom-level" label="Zoom level" value="Fit" className="ml-[35px] w-[108px]" />
        <Dropdown id="playback-resolution" label="Playback resolution" value="Full" className="ml-auto w-24" />
        <button aria-label="Settings" className="ml-5">
          <FaWrench className="size-5 -scale-x-100" />
        </button>
        <span className="ml-5 text-xl font-semibold">00:13:12:03</span>
      </div>
      <div className="pr-[18px] pl-[19px]">
        <div className="relative h-14">
          <svg className="absolute inset-0 h-full w-full" stroke="#8f8f8f">
            {ticks.map((i) => {
              const x = `${((32.5 + i * 42.6) / 723) * 100}%`;
              return <line key={i} x1={x} x2={x} y1={i === 3 || i === 13 ? 19 : 28} y2="36" />;
            })}
          </svg>
          <svg width="16" height="18" viewBox="0 0 16 18" className="absolute top-[15px] left-[93.9%] -translate-x-1/2">
            <path fill="#5a97f0" d="M0 0h16v11l-6 7H6l-6-7z" />
            <path stroke="#1d1d1d" d="M8 13v5" />
          </svg>
        </div>
        <ZoomBar from={54.3} to={73} />
      </div>
      <div className="flex h-[60px] justify-end gap-6 pr-[31px] pb-2.5">
        {transport.map((group, i) => (
          <div key={i} className="flex">
            {group.map((item) => (
              <button key={item.label} aria-label={item.label} className="flex w-[46px] items-center justify-center">
                <svg width={item.w} height="17" viewBox={`0 0 ${item.w} 17`} fill="currentColor" overflow="visible">
                  {item.art}
                </svg>
              </button>
            ))}
          </div>
        ))}
        <div className="-ml-2.5 flex">
          <button aria-label="More" className="flex w-[29px] items-center justify-center">
            <svg width="15" height="13" viewBox="0 0 15 13" fill="none" stroke="currentColor" strokeWidth="2">
              <path d="M1 1l5.500 5.500L1 12M8 1l5.500 5.500L8 12" />
            </svg>
          </button>
          <button aria-label="Button editor" className="flex w-[29px] items-center justify-center">
            <svg width="16" height="16" viewBox="0 0 16 16" stroke="currentColor" strokeWidth="3.500">
              <path d="M8 0v16M0 8h16" />
            </svg>
          </button>
        </div>
      </div>
    </section>
  );
}

export default function App() {
  return (
    <div className="h-screen min-h-[1500px] bg-[#2c5a86]">
      <div className="flex h-full flex-col overflow-hidden rounded-[18px] border border-[#484848] bg-[#1d1d1d] font-['Open_Sans','Noto_Sans',sans-serif] text-[15px] leading-5 text-[#b9b9b9]">
        <TopBar />
        <main className="grid flex-1 grid-cols-[1732fr_760fr] gap-1.5 border-t-2 border-b-[3px] border-black bg-black">
          <div className="flex flex-col gap-1.5">
            <EssentialSound />
            <Tools />
            <Timeline />
          </div>
          <ProgramMonitor />
        </main>
        <footer className="flex h-7 items-center justify-end pr-[23px]">
          <button aria-label="Info">
            <svg width="21" height="21" viewBox="0 0 21 21" fill="none" stroke="currentColor" strokeWidth="1.700">
              <circle cx="10.500" cy="10.500" r="9.300" />
              <path strokeWidth="2.200" d="M8.500 9h2.200v6M8 15.200h5M10.500 4.500v2.200" />
            </svg>
          </button>
        </footer>
      </div>
    </div>
  );
}
